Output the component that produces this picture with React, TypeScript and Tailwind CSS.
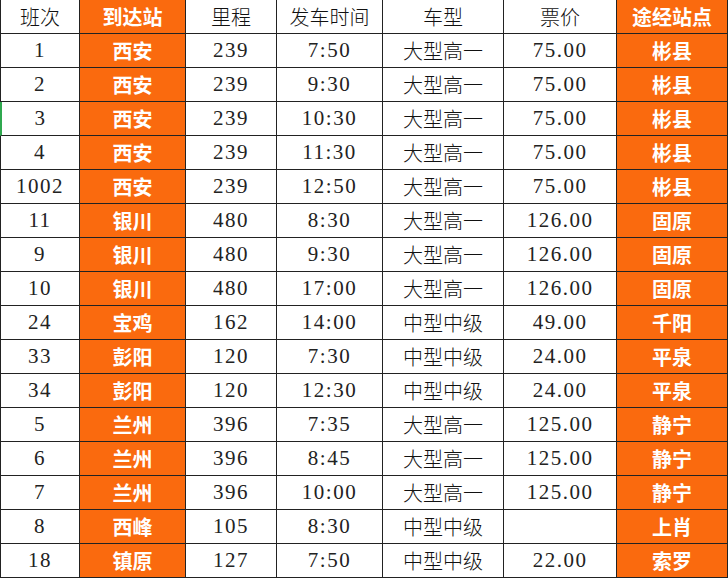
import React from "react";

const rows: string[][] = [
  ["1", "西安", "239", "7:50", "大型高一", "75.00", "彬县"],
  ["2", "西安", "239", "9:30", "大型高一", "75.00", "彬县"],
  ["3", "西安", "239", "10:30", "大型高一", "75.00", "彬县"],
  ["4", "西安", "239", "11:30", "大型高一", "75.00", "彬县"],
  ["1002", "西安", "239", "12:50", "大型高一", "75.00", "彬县"],
  ["11", "银川", "480", "8:30", "大型高一", "126.00", "固原"],
  ["9", "银川", "480", "9:30", "大型高一", "126.00", "固原"],
  ["10", "银川", "480", "17:00", "大型高一", "126.00", "固原"],
  ["24", "宝鸡", "162", "14:00", "中型中级", "49.00", "千阳"],
  ["33", "彭阳", "120", "7:30", "中型中级", "24.00", "平泉"],
  ["34", "彭阳", "120", "12:30", "中型中级", "24.00", "平泉"],
  ["5", "兰州", "396", "7:35", "大型高一", "125.00", "静宁"],
  ["6", "兰州", "396", "8:45", "大型高一", "125.00", "静宁"],
  ["7", "兰州", "396", "10:00", "大型高一", "125.00", "静宁"],
  ["8", "西峰", "105", "8:30", "中型中级", "", "上肖"],
  ["18", "镇原", "127", "7:50", "中型中级", "22.00", "索罗"],
];

const header = ["班次", "到达站", "里程", "发车时间", "车型", "票价", "途经站点"];

const serif =
  "[font-family:'Liberation_Serif','Noto_Sans_CJK_SC',serif] text-[21px] text-[#222] tracking-[1.5px]";
const cjk = "[font-family:'Noto_Sans_CJK_SC',sans-serif] font-light text-[20px] text-[#111]";
const bold =
  "[font-family:'Noto_Sans_CJK_SC',sans-serif] font-bold text-[20px] text-white bg-[#fa6a0e]";

function Cell({
  text,
  col,
  row,
}: {
  text: string;
  col: number;
  row: number;
}) {
  const orange = col === 1 || col === 6;
  const isHeader = row === 0;
  let font = serif;
  if (orange) font = bold;
  else if (isHeader || col === 4) font = cjk;
  const left = col === 0 ? (row === 3 ? "border-l-2 border-l-[#2fa84f]" : "border-l border-l-[#222]") : "";
  return (
    <div
      className={`h-[34px] flex items-center justify-center border-r border-b border-[#222] leading-none ${font} ${left}`}
    >
      {text}
    </div>
  );
}

export default function App() {
  const all = [header, ...rows];
  return (
    <div className="w-[728px] h-[579px] bg-white overflow-hidden">
      <div className="grid grid-cols-[80px_106px_91px_106px_121px_113px_111px]">
        {all.map((r, ri) =>
          r.map((t, ci) => <Cell key={`${ri}-${ci}`} text={t} col={ci} row={ri} />)
        )}
      </div>
    </div>
  );
}
